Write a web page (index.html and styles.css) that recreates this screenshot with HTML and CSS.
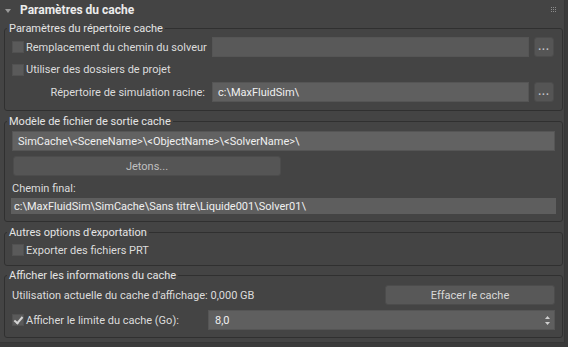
FILE: index.html
```html
<!DOCTYPE html>
<html lang="fr">
<head>
  <meta charset="UTF-8" />
  <meta name="viewport" content="width=device-width, initial-scale=1.0"/>
  <title>Paramètres du cache</title>
  <link rel="stylesheet" href="styles.css">
</head>
<body>
  <div class="rollout">
    <div class="rollout-head">
      <span class="twisty"></span>
      <span class="title">Paramètres du cache</span>
      <svg class="grip" width="5" height="5" viewBox="0 0 5 5">
        <rect x="0" y="0" width="1" height="1"/><rect x="2" y="0" width="1" height="1"/><rect x="4" y="0" width="1" height="1"/>
        <rect x="0" y="2" width="1" height="1"/><rect x="2" y="2" width="1" height="1"/><rect x="4" y="2" width="1" height="1"/>
        <rect x="0" y="4" width="1" height="1"/><rect x="2" y="4" width="1" height="1"/><rect x="4" y="4" width="1" height="1"/>
      </svg>
    </div>

    <div class="rollout-body">
      <!-- répertoire -->
      <fieldset class="group g-dir">
        <legend>Paramètres du répertoire cache</legend>
        <div class="dir-grid">
          <label class="check"><span class="box"></span>Remplacement du chemin du solveur</label>
          <div class="field off"></div>
          <button class="browse">...</button>

          <label class="check span-all"><span class="box"></span>Utiliser des dossiers de projet</label>

          <span class="lbl right">Répertoire de simulation racine:</span>
          <div class="field">c:\MaxFluidSim\</div>
          <button class="browse">...</button>
        </div>
      </fieldset>

      <!-- modèle -->
      <fieldset class="group g-tpl">
        <legend>Modèle de fichier de sortie cache</legend>
        <div class="field tpl">SimCache\&lt;SceneName&gt;\&lt;ObjectName&gt;\&lt;SolverName&gt;\</div>
        <button class="btn tokens">Jetons...</button>
        <div class="lbl final-lbl">Chemin final:</div>
        <div class="field final">c:\MaxFluidSim\SimCache\Sans titre\Liquide001\Solver01\</div>
      </fieldset>

      <!-- export -->
      <fieldset class="group g-exp">
        <legend>Autres options d'exportation</legend>
        <label class="check row16"><span class="box"></span>Exporter des fichiers PRT</label>
      </fieldset>

      <!-- infos -->
      <fieldset class="group g-info">
        <legend>Afficher les informations du cache</legend>
        <div class="info-row">
          <span class="lbl">Utilisation actuelle du cache d'affichage: 0,000 GB</span>
          <button class="btn clear">Effacer le cache</button>
        </div>
        <div class="info-row">
          <label class="check"><span class="box on"></span>Afficher le limite du cache (Go):</label>
          <div class="field spinner">
            <span>8,0</span>
            <svg width="5" height="9" viewBox="0 0 5 9">
              <path d="M2.5 0 L5 3 L0 3 Z" fill="#d0d0d0"/>
              <path d="M2.5 9 L5 6 L0 6 Z" fill="#d0d0d0"/>
            </svg>
          </div>
        </div>
      </fieldset>
    </div>
  </div>
</body>
</html>
```

FILE: styles.css
```css
body {
  margin: 0;
  background: #3a3a3a;
  font-family: Roboto, "Liberation Sans", sans-serif;
  font-size: 11px;
  color: #dcdcdc;
}

.rollout {
  width: 564px;
  background: #444444;
  border-right: 1px solid #363636;
  border-bottom: 1px solid #363636;
}

.rollout-head {
  height: 20px;
  display: flex;
  align-items: center;
  padding-left: 5px;
  padding-right: 8px;
}

.twisty {
  width: 0;
  height: 0;
  border-left: 3px solid transparent;
  border-right: 3px solid transparent;
  border-top: 4px solid #9a9a9a;
  margin-right: 9px;
  margin-top: 1px;
}

.title {
  font-weight: bold;
  font-size: 12px;
  color: #ececec;
  flex: 1;
}

.grip {
  fill: #8c8c8c;
  margin-top: -2px;
}

.rollout-body {
  padding: 0 1px 4px 4px;
}

.group {
  margin: 3px 0 0 0;
  border: 1px solid #303030;
  border-radius: 3px;
  padding: 1px 7px 7px 7px;
  min-width: 0;
}

.group legend {
  margin-left: -5px;
  padding: 0 2px;
  line-height: 15px;
  color: #e4e4e4;
}

.g-dir {
  margin-top: 1px;
  padding-bottom: 8px;
}

.g-info {
  margin-top: 2px;
  padding-top: 2px;
}

.dir-grid {
  display: grid;
  grid-template-columns: 195px 317px 20px;
  grid-template-rows: 20px 21px 20px;
  column-gap: 5px;
  row-gap: 2px;
}

.span-all {
  grid-column: 1 / 4;
}

.lbl {
  display: flex;
  align-items: center;
  white-space: nowrap;
}

.lbl.right {
  justify-content: flex-end;
  padding-right: 2px;
}

.check {
  display: flex;
  align-items: center;
  white-space: nowrap;
}

.box {
  width: 12px;
  height: 12px;
  box-sizing: border-box;
  background: #5a5a5a;
  border: 1px solid #515151;
  margin-right: 2px;
  flex: none;
  position: relative;
}

.box.on::after {
  content: "";
  position: absolute;
  left: 3px;
  top: 0px;
  width: 3px;
  height: 7px;
  border-right: 2px solid #d4d4d4;
  border-bottom: 2px solid #d4d4d4;
  transform: rotate(40deg);
}

.field {
  box-sizing: border-box;
  background: #5f5f5f;
  border: 1px solid #555555;
  color: #f0f0f0;
  padding: 0 5px;
  display: flex;
  align-items: center;
  white-space: nowrap;
  overflow: hidden;
}

.field.off {
  background: #595959;
}

button {
  font: inherit;
  cursor: pointer;
}

.browse {
  box-sizing: border-box;
  background: #555555;
  border: 1px solid #4c4c4c;
  border-radius: 3px;
  color: #c8c8d0;
  padding: 0;
  line-height: 14px;
  font-weight: bold;
  font-size: 10px;
  letter-spacing: 1px;
}

.btn {
  box-sizing: border-box;
  height: 20px;
  background: #585858;
  border: 1px solid #4c4c4c;
  border-radius: 3px;
  color: #d8d8d8;
  padding: 0;
}

.tpl {
  height: 20px;
  margin-top: 1px;
  background: #626262;
}

.tokens {
  display: block;
  width: 268px;
  margin: 5px 0 0 1px;
  color: #c0c0c0;
  background: #555555;
}

.final-lbl {
  height: 16px;
  margin-top: 4px;
}

.final {
  height: 16px;
  margin: 2px -1px 0 -1px;
  padding-left: 3px;
  background: #5e5e5e;
  border: none;
}

.row16 {
  height: 16px;
  margin-top: 1px;
}

.info-row {
  display: flex;
  align-items: center;
  justify-content: space-between;
  height: 20px;
}

.info-row + .info-row {
  margin-top: 5px;
}

.clear {
  width: 170px;
}

.spinner {
  width: 347px;
  height: 20px;
  justify-content: space-between;
  padding: 0 4px 0 6px;
}
```
